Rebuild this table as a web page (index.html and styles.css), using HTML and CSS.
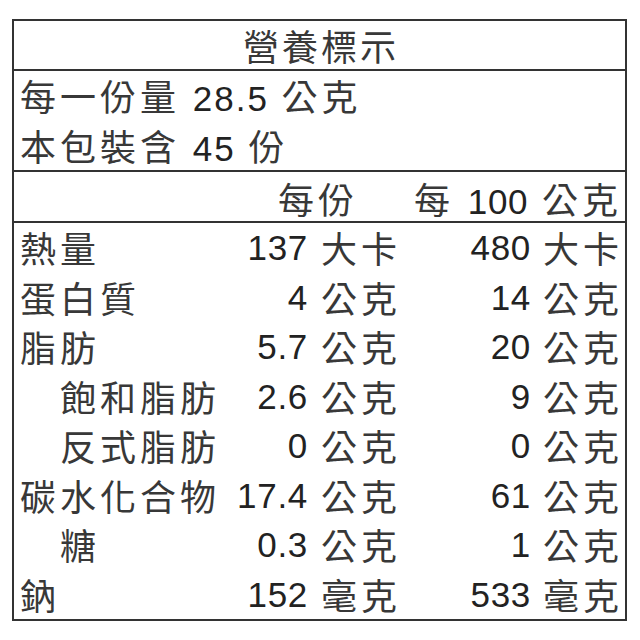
FILE: index.html
```html
<!DOCTYPE html>
<html lang="zh-Hant">
<head>
<meta charset="utf-8">
<title>營養標示</title>
<link rel="stylesheet" href="styles.css">
</head>
<body>
<div class="label">
  <div class="title zh">營養標示</div>
  <div class="serving">
    <div class="line"><span class="zh">每一份量</span> <span class="num wide">28.5</span> <span class="zh">公克</span></div>
    <div class="line"><span class="zh">本包裝含</span> <span class="num wide">45</span> <span class="zh">份</span></div>
  </div>
  <div class="head grid">
    <div class="h1 zh">每份</div>
    <div class="h2"><span class="zh">每</span> <span class="num">100</span> <span class="zh">公克</span></div>
  </div>
  <div class="rows">
    <div class="row grid"><div class="name zh">熱量</div><div class="num">137</div><div class="unit zh">大卡</div><div class="num">480</div><div class="unit zh">大卡</div></div>
    <div class="row grid"><div class="name zh">蛋白質</div><div class="num">4</div><div class="unit zh">公克</div><div class="num">14</div><div class="unit zh">公克</div></div>
    <div class="row grid"><div class="name zh">脂肪</div><div class="num">5.7</div><div class="unit zh">公克</div><div class="num">20</div><div class="unit zh">公克</div></div>
    <div class="row grid"><div class="name sub zh">飽和脂肪</div><div class="num">2.6</div><div class="unit zh">公克</div><div class="num">9</div><div class="unit zh">公克</div></div>
    <div class="row grid"><div class="name sub zh">反式脂肪</div><div class="num">0</div><div class="unit zh">公克</div><div class="num">0</div><div class="unit zh">公克</div></div>
    <div class="row grid"><div class="name zh">碳水化合物</div><div class="num">17.4</div><div class="unit zh">公克</div><div class="num">61</div><div class="unit zh">公克</div></div>
    <div class="row grid"><div class="name sub zh">糖</div><div class="num">0.3</div><div class="unit zh">公克</div><div class="num">1</div><div class="unit zh">公克</div></div>
    <div class="row grid"><div class="name zh">鈉</div><div class="num">152</div><div class="unit zh">毫克</div><div class="num">533</div><div class="unit zh">毫克</div></div>
  </div>
</div>
</body>
</html>
```

FILE: styles.css
```css
html, body {
  margin: 0;
  padding: 0;
  background: #ffffff;
}

body {
  font-family: "Liberation Sans", "Noto Sans CJK TC", sans-serif;
  color: #2b2b2b;
}

.label {
  margin: 19px 0 0 12px;
  width: 615px;
  box-sizing: border-box;
  border: 2px solid #333333;
}

.zh {
  font-family: "Noto Sans CJK TC", sans-serif;
  font-size: 36px;
  letter-spacing: 4px;
  color: #383838;
}

.num {
  font-family: "Liberation Sans", sans-serif;
  font-size: 35px;
  letter-spacing: 0.7px;
  color: #222222;
}

.num.wide {
  letter-spacing: 2px;
}

.title {
  height: 48px;
  line-height: 48px;
  text-align: center;
  font-size: 36px;
  letter-spacing: 3px;
  padding-left: 3px;
  border-bottom: 2px solid #333333;
}

.serving {
  height: 99px;
  padding-left: 6px;
  border-bottom: 2px solid #333333;
  font-size: 35px;
  word-spacing: 3px;
}

.line {
  height: 49.5px;
  line-height: 49.5px;
  white-space: nowrap;
}

.grid {
  display: grid;
  grid-template-columns: 207px 81px 91px 132px 91px;
  align-items: center;
  padding: 0 3px 0 6px;
}

.head {
  height: 49px;
  border-bottom: 2px solid #333333;
  font-size: 35px;
  white-space: nowrap;
}

.h1 {
  grid-column: 2 / 4;
  text-align: center;
  padding-left: 10px;
}

.h2 {
  grid-column: 4 / 6;
  text-align: right;
  word-spacing: 4px;
}

.row {
  height: 49.5px;
  line-height: 49.5px;
  white-space: nowrap;
}

.row .num {
  text-align: right;
}

.unit {
  padding-left: 13px;
}

.row .unit:last-child {
  padding-left: 12px;
}

.sub {
  padding-left: 40px;
}
```
